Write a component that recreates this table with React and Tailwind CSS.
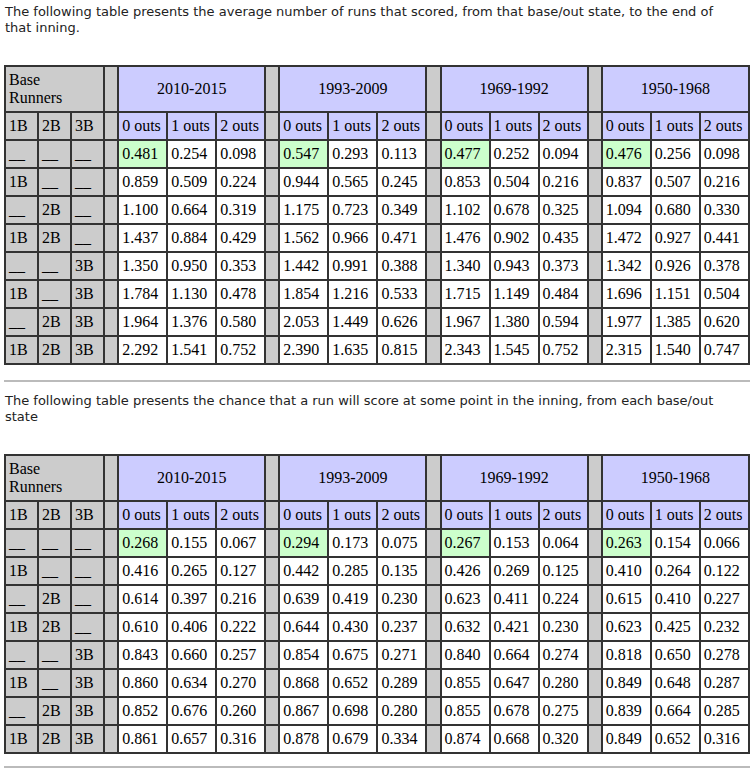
import React from "react";

const periods = ["2010-2015", "1993-2009", "1969-1992", "1950-1968"];

const bases = [
  ["__", "__", "__"],
  ["1B", "__", "__"],
  ["__", "2B", "__"],
  ["1B", "2B", "__"],
  ["__", "__", "3B"],
  ["1B", "__", "3B"],
  ["__", "2B", "3B"],
  ["1B", "2B", "3B"],
];

// rows: 12 values each, 4 periods x 3 outs
const runsExpected = [
  ["0.481", "0.254", "0.098", "0.547", "0.293", "0.113", "0.477", "0.252", "0.094", "0.476", "0.256", "0.098"],
  ["0.859", "0.509", "0.224", "0.944", "0.565", "0.245", "0.853", "0.504", "0.216", "0.837", "0.507", "0.216"],
  ["1.100", "0.664", "0.319", "1.175", "0.723", "0.349", "1.102", "0.678", "0.325", "1.094", "0.680", "0.330"],
  ["1.437", "0.884", "0.429", "1.562", "0.966", "0.471", "1.476", "0.902", "0.435", "1.472", "0.927", "0.441"],
  ["1.350", "0.950", "0.353", "1.442", "0.991", "0.388", "1.340", "0.943", "0.373", "1.342", "0.926", "0.378"],
  ["1.784", "1.130", "0.478", "1.854", "1.216", "0.533", "1.715", "1.149", "0.484", "1.696", "1.151", "0.504"],
  ["1.964", "1.376", "0.580", "2.053", "1.449", "0.626", "1.967", "1.380", "0.594", "1.977", "1.385", "0.620"],
  ["2.292", "1.541", "0.752", "2.390", "1.635", "0.815", "2.343", "1.545", "0.752", "2.315", "1.540", "0.747"],
];

const runChance = [
  ["0.268", "0.155", "0.067", "0.294", "0.173", "0.075", "0.267", "0.153", "0.064", "0.263", "0.154", "0.066"],
  ["0.416", "0.265", "0.127", "0.442", "0.285", "0.135", "0.426", "0.269", "0.125", "0.410", "0.264", "0.122"],
  ["0.614", "0.397", "0.216", "0.639", "0.419", "0.230", "0.623", "0.411", "0.224", "0.615", "0.410", "0.227"],
  ["0.610", "0.406", "0.222", "0.644", "0.430", "0.237", "0.632", "0.421", "0.230", "0.623", "0.425", "0.232"],
  ["0.843", "0.660", "0.257", "0.854", "0.675", "0.271", "0.840", "0.664", "0.274", "0.818", "0.650", "0.278"],
  ["0.860", "0.634", "0.270", "0.868", "0.652", "0.289", "0.855", "0.647", "0.280", "0.849", "0.648", "0.287"],
  ["0.852", "0.676", "0.260", "0.867", "0.698", "0.280", "0.855", "0.678", "0.275", "0.839", "0.664", "0.285"],
  ["0.861", "0.657", "0.316", "0.878", "0.679", "0.334", "0.874", "0.668", "0.320", "0.849", "0.652", "0.316"],
];

const cell = "border-2 border-[#333333] px-[3px] align-middle whitespace-nowrap";
const grey = "bg-[#cccccc]";
const sep = `${cell} ${grey} p-0`;

function RunTable({ data }) {
  return (
    <table className="table-fixed border-collapse w-[746px] font-['Liberation_Serif',serif] text-[16px] leading-[18px] text-black">
      <colgroup>
        <col className="w-[33px]" />
        <col className="w-[33px]" />
        <col className="w-[33px]" />
        {periods.map((p) => (
          <React.Fragment key={p}>
            <col className="w-[14px]" />
            <col className="w-[49px]" />
            <col className="w-[49px]" />
            <col className="w-[49px]" />
          </React.Fragment>
        ))}
      </colgroup>
      <tbody>
        <tr className="h-[46px]">
          <td colSpan={3} className={`${cell} ${grey} text-left`}>
            Base
            <br />
            Runners
          </td>
          {periods.map((p) => (
            <React.Fragment key={p}>
              <td className={sep}></td>
              <td colSpan={3} className={`${cell} bg-[#ccccff] text-center`}>
                {p}
              </td>
            </React.Fragment>
          ))}
        </tr>
        <tr className="h-[28px]">
          <td className={`${cell} ${grey}`}>1B</td>
          <td className={`${cell} ${grey}`}>2B</td>
          <td className={`${cell} ${grey}`}>3B</td>
          {periods.map((p) => (
            <React.Fragment key={p}>
              <td className={sep}></td>
              <td className={`${cell} bg-[#ccccff]`}>0 outs</td>
              <td className={`${cell} bg-[#ccccff]`}>1 outs</td>
              <td className={`${cell} bg-[#ccccff]`}>2 outs</td>
            </React.Fragment>
          ))}
        </tr>
        {data.map((row, r) => (
          <tr key={r} className="h-[28px]">
            {bases[r].map((b, i) => (
              <td key={i} className={`${cell} ${grey}`}>
                {b}
              </td>
            ))}
            {periods.map((p, g) => (
              <React.Fragment key={p}>
                <td className={sep}></td>
                {row.slice(g * 3, g * 3 + 3).map((v, k) => (
                  <td
                    key={k}
                    className={`${cell} ${r === 0 && k === 0 ? "bg-[#ccffcc]" : "bg-white"}`}
                  >
                    {v}
                  </td>
                ))}
              </React.Fragment>
            ))}
          </tr>
        ))}
      </tbody>
    </table>
  );
}

export default function App() {
  return (
    <div className="bg-white w-[754px] min-h-[777px] px-[4px] pt-[4px] font-['DejaVu_Sans',Verdana,sans-serif] text-[13px] leading-[16px] text-[#222222]">
      <p className="pl-[1px] pr-[26px]">
        The following table presents the average number of runs that scored, from that base/out state, to the end of
        that inning.
      </p>
      <div className="mt-[29px]">
        <RunTable data={runsExpected} />
      </div>
      <hr className="mt-[15px] border-t-2 border-[#bbbbbb] w-[746px]" />
      <p className="mt-[11px] pl-[1px] pr-[26px]">
        The following table presents the chance that a run will score at some point in the inning, from each base/out
        state
      </p>
      <div className="mt-[29px]">
        <RunTable data={runChance} />
      </div>
      <hr className="mt-[12px] border-t-2 border-[#bbbbbb] w-[746px]" />
    </div>
  );
}
